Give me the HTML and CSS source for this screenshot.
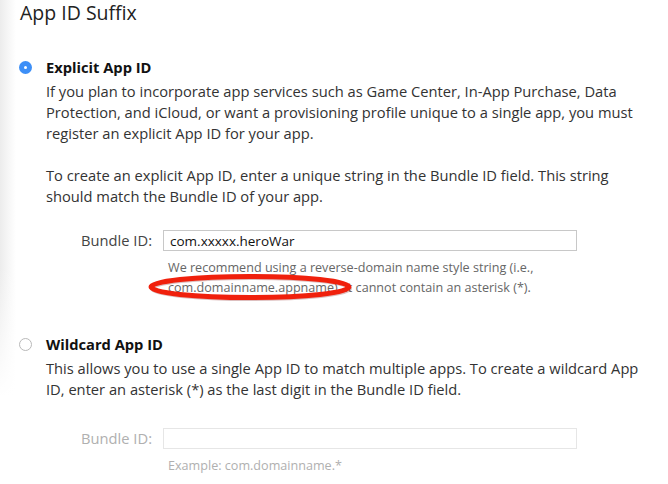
FILE: index.html
```html
<!DOCTYPE html>
<html lang="en">
<head>
    <meta charset="UTF-8">
    <meta name="viewport" content="width=device-width, initial-scale=1.0">
    <title>App ID Suffix</title>
    <link rel="stylesheet" href="styles.css">
</head>
<body>
    <div class="section">
        <h1 class="section-title">App ID Suffix</h1>

        <div class="option">
            <span class="radio checked"></span>
            <div class="option-body">
                <h2>Explicit App ID</h2>
                <p>If you plan to incorporate app services such as Game Center, In-App Purchase, Data Protection, and iCloud, or want a provisioning profile unique to a single app, you must register an explicit App ID for your app.</p>
                <p>To create an explicit App ID, enter a unique string in the Bundle ID field. This string should match the Bundle ID of your app.</p>

                <div class="field">
                    <label for="explicitId">Bundle ID:</label>
                    <div class="field-input">
                        <input type="text" id="explicitId" value="com.xxxxx.heroWar">
                        <div class="help">
                            We recommend using a reverse-domain name style string (i.e., com.domainname.appname). It cannot contain an asterisk (*).
                            <svg class="mark" width="214" height="34" viewBox="0 0 214 34">
                                <ellipse cx="106" cy="17" rx="99" ry="10.5" fill="none" stroke="rgba(120,0,0,0.25)" stroke-width="4" transform="translate(1 1.5)"/>
                                <ellipse cx="106" cy="17" rx="99" ry="10.5" fill="none" stroke="#f0200c" stroke-width="5"/>
                            </svg>
                        </div>
                    </div>
                </div>
            </div>
        </div>

        <div class="option">
            <span class="radio"></span>
            <div class="option-body">
                <h2>Wildcard App ID</h2>
                <p>This allows you to use a single App ID to match multiple apps. To create a wildcard App ID, enter an asterisk (*) as the last digit in the Bundle ID field.</p>

                <div class="field field-disabled">
                    <label for="wildcardId">Bundle ID:</label>
                    <div class="field-input">
                        <input type="text" id="wildcardId" disabled>
                        <div class="help">Example: com.domainname.*</div>
                    </div>
                </div>
            </div>
        </div>
    </div>
</body>
</html>
```

FILE: styles.css
```css
* {
    margin: 0;
    padding: 0;
    box-sizing: border-box;
}

html {
    height: 100%;
}

body {
    min-height: 100%;
    font-family: 'Open Sans', 'Noto Sans', sans-serif;
    color: #333;
    /* soft shadow along the left edge, fading out towards the bottom */
    background:
        linear-gradient(to bottom, rgba(255, 255, 255, 0) 55%, #fff 82%),
        linear-gradient(to right, #ececec 0, #f6f6f6 8px, #fff 16px);
}

.section {
    padding: 0 0 0 20px;
}

.section-title {
    font-size: 19.5px;
    font-weight: normal;
    color: #222;
    line-height: 26px;
}

.option {
    display: flex;
    align-items: flex-start;
    margin-top: 31px;
}

.option + .option {
    margin-top: 36px;
}

.radio {
    width: 13px;
    height: 13px;
    margin: 4px 14px 0 -1px;
    flex: none;
    border-radius: 50%;
    border: 1px solid #b9b9b9;
    background: #fff;
    position: relative;
}

.radio.checked {
    border: none;
    background: #3d8ff7;
}

.radio.checked::after {
    content: '';
    position: absolute;
    left: 5px;
    top: 5px;
    width: 3px;
    height: 3px;
    border-radius: 50%;
    background: #fff;
}

.option-body {
    width: 600px;
}

.option-body h2 {
    font-size: 14.7px;
    font-weight: bold;
    color: #111;
    line-height: 21px;
    margin-bottom: 3px;
}

.option-body p {
    font-size: 14.7px;
    line-height: 21px;
    color: #333;
}

.option-body p + p {
    margin-top: 21px;
}

.field {
    display: flex;
    align-items: flex-start;
    margin-top: 23px;
}

.field-disabled {
    margin-top: 28px;
}

.field label {
    width: 106px;
    text-align: right;
    font-size: 14.7px;
    line-height: 21px;
    color: #444;
    margin-right: 11px;
}

.field-disabled label {
    color: #b0b0b0;
}

.field-input {
    width: 414px;
}

.field input {
    display: block;
    width: 414px;
    height: 21px;
    border: 1px solid #c8c8c8;
    padding: 0 6px;
    font-family: 'Open Sans', 'Noto Sans', sans-serif;
    font-size: 13.5px;
    color: #111;
    background: #fff;
    outline: none;
}

.field input:disabled {
    border-color: #e6e6e6;
}

.help {
    position: relative;
    margin-top: 7px;
    padding-left: 5px;
    font-size: 12.6px;
    line-height: 20px;
    color: #666;
}

.field-disabled .help {
    color: #b0b0b0;
}

/* red marker drawn around the suggested bundle id */
.mark {
    position: absolute;
    left: -19px;
    top: 12px;
}
```
